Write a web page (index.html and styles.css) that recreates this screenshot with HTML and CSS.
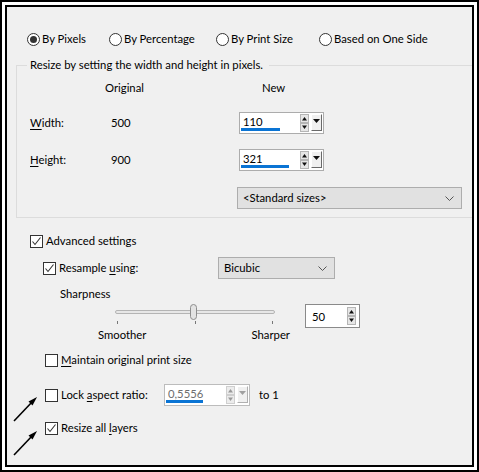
FILE: index.html
```html
<!doctype html>
<html>
  <head>
    <title>Resize</title>
    <meta name="viewport" content="width=device-width, initial-scale=1">
    <link rel="stylesheet" href="styles.css">
  </head>
  <body>
    <div class="frame">
      <div class="dialog">
        <div class="modes">
          <label class="opt opt-pixels"><span class="radio on"></span><span>By Pixels</span></label>
          <label class="opt opt-percent"><span class="radio"></span><span>By Percentage</span></label>
          <label class="opt opt-print"><span class="radio"></span><span>By Print Size</span></label>
          <label class="opt"><span class="radio"></span><span>Based on One Side</span></label>
        </div>

        <fieldset class="group">
          <legend>Resize by setting the width and height in pixels.</legend>
          <div class="row head">
            <span class="c1"></span>
            <span class="c2 orig">Original</span>
            <span class="new">New</span>
          </div>
          <div class="row size-row">
            <span class="c1"><u>W</u>idth:</span>
            <span class="c2">500</span>
            <div class="spin">
              <div class="spin-field">
                <span>110</span>
                <i class="bar" style="width: 39px"></i>
              </div>
              <svg class="arrows" width="9" height="18" viewBox="0 0 9 18">
                <rect x="0.5" y="0.5" width="8" height="8" fill="#e6e6e6" stroke="#b5b5b5"/>
                <path d="M2 6.5 L4.5 3 L7 6.5 Z" fill="#111"/>
                <rect x="0.5" y="9.5" width="8" height="8" fill="#e6e6e6" stroke="#b5b5b5"/>
                <path d="M2 11.5 L4.5 15 L7 11.5 Z" fill="#111"/>
              </svg>
              <div class="drop"><svg width="7" height="4" viewBox="0 0 7 4"><path d="M0 0 H7 L3.5 4 Z" fill="#111"/></svg></div>
            </div>
          </div>
          <div class="row size-row second">
            <span class="c1"><u>H</u>eight:</span>
            <span class="c2">900</span>
            <div class="spin">
              <div class="spin-field">
                <span>321</span>
                <i class="bar" style="width: 48px"></i>
              </div>
              <svg class="arrows" width="9" height="18" viewBox="0 0 9 18">
                <rect x="0.5" y="0.5" width="8" height="8" fill="#e6e6e6" stroke="#b5b5b5"/>
                <path d="M2 6.5 L4.5 3 L7 6.5 Z" fill="#111"/>
                <rect x="0.5" y="9.5" width="8" height="8" fill="#e6e6e6" stroke="#b5b5b5"/>
                <path d="M2 11.5 L4.5 15 L7 11.5 Z" fill="#111"/>
              </svg>
              <div class="drop"><svg width="7" height="4" viewBox="0 0 7 4"><path d="M0 0 H7 L3.5 4 Z" fill="#111"/></svg></div>
            </div>
          </div>
          <div class="select std">
            <span>&lt;Standard sizes&gt;</span>
            <svg width="9" height="5" viewBox="0 0 9 5"><path d="M0.5 0.5 L4.5 4.5 L8.5 0.5" fill="none" stroke="#555" stroke-width="1"/></svg>
          </div>
        </fieldset>

        <div class="lower">
          <label class="check-row adv">
            <span class="box"><svg width="11" height="11" viewBox="0 0 11 11"><path d="M1.5 5.5 L4 8.5 L9.5 1.5" fill="none" stroke="#333" stroke-width="1.1"/></svg></span>
            <span>Advanced settings</span>
          </label>

          <div class="resample">
            <label class="check-row resample-label">
              <span class="box"><svg width="11" height="11" viewBox="0 0 11 11"><path d="M1.5 5.5 L4 8.5 L9.5 1.5" fill="none" stroke="#333" stroke-width="1.1"/></svg></span>
              <span>Resample <u>u</u>sing:</span>
            </label>
            <div class="select bicubic">
              <span>Bicubic</span>
              <svg width="9" height="5" viewBox="0 0 9 5"><path d="M0.5 0.5 L4.5 4.5 L8.5 0.5" fill="none" stroke="#555" stroke-width="1"/></svg>
            </div>
          </div>

          <div class="sharp-title">Sharpness</div>

          <div class="sharp">
            <div class="slider">
              <div class="track-area">
                <div class="track"></div>
                <div class="thumb"></div>
              </div>
              <div class="ticks"><b></b><b></b><b></b></div>
              <div class="ends"><span>Smoother</span><span>Sharper</span></div>
            </div>
            <div class="spin small">
              <div class="spin-field"><span>50</span></div>
              <svg class="arrows" width="9" height="18" viewBox="0 0 9 18">
                <rect x="0.5" y="0.5" width="8" height="8" fill="#e6e6e6" stroke="#b5b5b5"/>
                <path d="M2 6.5 L4.5 3 L7 6.5 Z" fill="#111"/>
                <rect x="0.5" y="9.5" width="8" height="8" fill="#e6e6e6" stroke="#b5b5b5"/>
                <path d="M2 11.5 L4.5 15 L7 11.5 Z" fill="#111"/>
              </svg>
            </div>
          </div>

          <label class="check-row opt-row maintain">
            <span class="box"></span>
            <span><u>M</u>aintain original print size</span>
          </label>

          <div class="lock">
            <label class="check-row opt-row lock-label">
              <span class="box"></span>
              <span>Lock <u>a</u>spect ratio:</span>
            </label>
            <div class="spin off">
              <div class="spin-field">
                <span>0,5556</span>
                <i class="bar" style="width: 37px"></i>
              </div>
              <svg class="arrows" width="9" height="18" viewBox="0 0 9 18">
                <rect x="0.5" y="0.5" width="8" height="8" fill="#ececec" stroke="#cfcfcf"/>
                <path d="M2 6.5 L4.5 3 L7 6.5 Z" fill="#9a9a9a"/>
                <rect x="0.5" y="9.5" width="8" height="8" fill="#ececec" stroke="#cfcfcf"/>
                <path d="M2 11.5 L4.5 15 L7 11.5 Z" fill="#9a9a9a"/>
              </svg>
              <div class="drop"><svg width="7" height="4" viewBox="0 0 7 4"><path d="M0 0 H7 L3.5 4 Z" fill="#a0a0a0"/></svg></div>
            </div>
            <span class="to">to 1</span>
          </div>

          <label class="check-row opt-row layers">
            <span class="box"><svg width="11" height="11" viewBox="0 0 11 11"><path d="M1.5 5.5 L4 8.5 L9.5 1.5" fill="none" stroke="#333" stroke-width="1.1"/></svg></span>
            <span>Resize all <u>l</u>ayers</span>
          </label>
        </div>
      </div>
    </div>

    <svg class="pointers" width="479" height="472" viewBox="0 0 479 472">
      <path d="M14 421 L33 401" stroke="#000" stroke-width="1.6"/>
      <path d="M37 397 L28.5 401.5 L32.5 405.5 Z" fill="#000"/>
      <path d="M14 455 L33 435" stroke="#000" stroke-width="1.6"/>
      <path d="M37 431 L28.5 435.5 L32.5 439.5 Z" fill="#000"/>
    </svg>
  </body>
</html>
```

FILE: styles.css
```css
* {
  box-sizing: border-box;
}

html, body {
  margin: 0;
  padding: 0;
  background: #fff;
}

body {
  position: relative;
  width: 479px;
  height: 472px;

  font-family: Lato, "Noto Sans", "Liberation Sans", sans-serif;
  font-size: 11.3px;
  line-height: 16px;
  color: #000;
}

.frame {
  width: 479px;
  height: 472px;
  border: 2px solid #000;
  padding: 3px;
}

.dialog {
  height: 100%;
  border: 2px solid #000;
  background: #f0f0f0;
  overflow: hidden;
}

u {
  text-decoration-thickness: 1px;
  text-underline-offset: 2px;
}

/* radio row */

.modes {
  display: flex;
  margin-top: 24px;
  padding-left: 20px;
  height: 16px;
}

.opt {
  display: flex;
  align-items: center;
  white-space: nowrap;
}

.opt-pixels { width: 82px; }
.opt-percent { width: 107px; }
.opt-print { width: 103px; }

.radio {
  width: 13px;
  height: 13px;
  margin-right: 2px;
  border: 1px solid #333;
  border-radius: 50%;
  background: #fff;

  display: flex;
  align-items: center;
  justify-content: center;
}

.radio.on::after {
  content: "";
  width: 7px;
  height: 7px;
  border-radius: 50%;
  background: #333;
}

/* group box */

.group {
  margin: 10px -6px 0 9px;
  padding: 0 0 8px 13px;
  min-width: 0;
  border: 1px solid #dcdcdc;
}

.group legend {
  margin-left: -3px;
  padding: 0 6px 0 3px;
  line-height: 16px;
}

.row {
  display: flex;
  align-items: center;
}

.c1 { width: 81px; }
.c2 { width: 128px; }

.head {
  margin-top: 7px;
  height: 16px;
}

.orig {
  margin-left: -6px;
  margin-right: 6px;
}

.new {
  margin-left: 23px;
}

.size-row {
  margin-top: 16px;
  height: 22px;
}

.size-row.second {
  margin-top: 15px;
}

/* spin boxes */

.spin {
  display: flex;
  align-items: center;
  width: 85px;
  height: 22px;
  padding: 1px;
  border: 1px solid #acacac;
  background: #fff;
}

.spin-field {
  flex: 1;
  align-self: stretch;
  position: relative;
  padding-left: 2px;
}

.bar {
  position: absolute;
  left: 0;
  bottom: 1px;
  height: 3px;
  background: #0a74d4;
}

.arrows {
  display: block;
  margin-right: 2px;
}

.drop {
  width: 11px;
  height: 17px;
  margin-top: -1px;
  border: 1px solid;
  border-color: #fff #6a6a6a #6a6a6a #fff;
  background: #f0f0f0;

  display: flex;
  justify-content: center;
  padding-top: 4px;
}

.drop svg {
  display: block;
}

.spin.small {
  width: 55px;
  height: 24px;
  margin-left: 15px;
  border-color: #8a8a8a;
}

.spin.small .spin-field {
  padding-left: 5px;
  padding-top: 3px;
}

.spin.off {
  border-color: #bcbcbc;
  color: #6d6d6d;
}

.spin.off .drop {
  border-color: #fff #b0b0b0 #b0b0b0 #fff;
}

/* selects */

.select {
  display: flex;
  align-items: center;
  justify-content: space-between;
  height: 22px;
  padding: 0 7px 0 5px;
  border: 1px solid #adadad;
  background: #e1e1e1;
}

.std {
  width: 225px;
  margin: 16px 0 0 207px;
}

.bicubic {
  width: 117px;
}

/* lower part */

.lower {
  padding-left: 23px;
}

.check-row {
  display: flex;
  align-items: center;
  height: 16px;
  white-space: nowrap;
}

.box {
  width: 13px;
  height: 13px;
  margin-right: 3px;
  border: 1px solid #333;
  background: #fff;
  display: flex;
  align-items: center;
  justify-content: center;
}

.box svg {
  display: block;
}

.adv {
  margin-top: 15px;
}

.resample {
  display: flex;
  align-items: center;
  margin-top: 8px;
  height: 22px;
}

.resample-label {
  width: 188px;
  padding-left: 13px;
}

.sharp-title {
  margin-top: 7px;
  padding-left: 30px;
}

.sharp {
  display: flex;
  align-items: flex-start;
  margin-top: 2px;
}

.slider {
  width: 192px;
  margin-left: 68px;
}

.track-area {
  position: relative;
  height: 16px;
  margin: 0 15px 0 17px;
}

.track {
  position: absolute;
  left: 0;
  right: 0;
  top: 6px;
  height: 4px;
  border: 1px solid #b4b4b4;
  border-radius: 2px;
  background: #e7e7e7;
}

.thumb {
  position: absolute;
  left: 75px;
  top: 0;
  width: 7px;
  height: 16px;
  border: 1px solid #8d8d8d;
  border-radius: 4px;
  background: #e3e3e3;
}

.ticks {
  display: flex;
  justify-content: space-between;
  height: 4px;
  margin: 1px 17px 0 19px;
}

.ticks b {
  display: block;
  width: 1px;
  height: 3px;
  background: #777;
}

.ends {
  display: flex;
  justify-content: space-between;
  margin-top: 2px;
}

.opt-row {
  padding-left: 15px;
}

.maintain {
  margin-top: 9px;
}

.lock {
  display: flex;
  align-items: center;
  margin-top: 16px;
  height: 22px;
}

.lock-label {
  width: 134px;
}

.spin.off {
  width: 86px;
}

.to {
  margin-left: 9px;
}

.layers {
  margin-top: 14px;
}

.pointers {
  position: absolute;
  left: 0;
  top: 0;
  pointer-events: none;
}
```
